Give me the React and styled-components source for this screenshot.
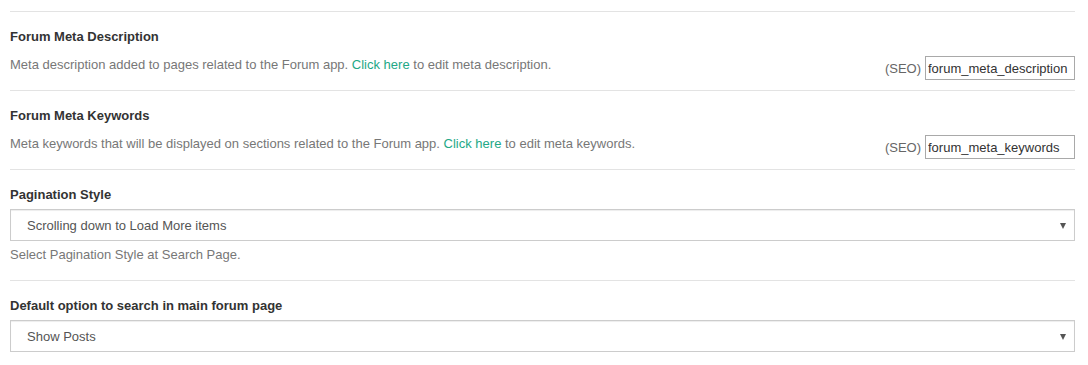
import React from 'react';
import styled, { createGlobalStyle } from 'styled-components';

const GlobalStyle = createGlobalStyle`
    body {
        margin: 0;
        background: #fff;
        font-family: "Liberation Sans", Arial, sans-serif;
    }
`;

const Page = styled.div`
    padding: 11px 13px 0 10px;
`;

const Section = styled.div`
    border-top: 1px solid #e3e3e3;
    padding: 16px 0 10px;
`;

const Title = styled.div`
    font-size: 13px;
    font-weight: bold;
    line-height: 18px;
    color: #333;
`;

const DescRow = styled.div`
    display: flex;
    justify-content: space-between;
    align-items: flex-start;
    margin-top: 10px;
`;

const Desc = styled.div`
    font-size: 13px;
    line-height: 18px;
    color: #777;
    margin-top: ${p => p.$top || 0}px;
    margin-bottom: ${p => p.$bottom || 0}px;
`;

const Link = styled.a`
    color: #23a886;
    text-decoration: none;
`;

const SeoGroup = styled.div`
    display: flex;
    align-items: center;
    gap: 4px;
    font-size: 13px;
    color: #666;
`;

const SeoInput = styled.input`
    box-sizing: border-box;
    width: 150px;
    height: 24px;
    border: 1px solid #a9a9a9;
    padding: 0 2px;
    margin: 0;
    font-family: inherit;
    font-size: 13px;
    color: #333;
    outline: none;
`;

const SelectWrap = styled.div`
    position: relative;
    margin-top: 5px;

    &::after {
        content: '';
        position: absolute;
        right: 9px;
        top: 14px;
        border-left: 3.5px solid transparent;
        border-right: 3.5px solid transparent;
        border-top: 6px solid #555;
    }
`;

const Select = styled.select`
    appearance: none;
    -webkit-appearance: none;
    box-sizing: border-box;
    display: block;
    width: 100%;
    height: 32px;
    margin: 0;
    padding: 0 30px 0 16px;
    border: 1px solid #ccc;
    border-radius: 0;
    background: #fff;
    box-shadow: inset 0 1px 1px rgba(0, 0, 0, 0.075);
    font-family: inherit;
    font-size: 13px;
    color: #555;
    outline: none;
`;

const MetaField = ({ title, text, action, value }) => (
    <Section>
        <Title>{title}</Title>
        <DescRow>
            <Desc>
                {text} <Link href="#">Click here</Link> {action}
            </Desc>
            <SeoGroup>
                (SEO)
                <SeoInput defaultValue={value} />
            </SeoGroup>
        </DescRow>
    </Section>
);

const SelectField = ({ title, options, help }) => (
    <Section>
        <Title>{title}</Title>
        <SelectWrap>
            <Select defaultValue={options[0]}>
                {options.map(o => <option key={o}>{o}</option>)}
            </Select>
        </SelectWrap>
        {help && <Desc $top={5} $bottom={6}>{help}</Desc>}
    </Section>
);

const App = () => {
    return (
        <Page>
            <GlobalStyle />
            <MetaField
                title="Forum Meta Description"
                text="Meta description added to pages related to the Forum app."
                action="to edit meta description."
                value="forum_meta_description"
            />
            <MetaField
                title="Forum Meta Keywords"
                text="Meta keywords that will be displayed on sections related to the Forum app."
                action="to edit meta keywords."
                value="forum_meta_keywords"
            />
            <SelectField
                title="Pagination Style"
                options={['Scrolling down to Load More items', 'Use Pagination with page number']}
                help="Select Pagination Style at Search Page."
            />
            <SelectField
                title="Default option to search in main forum page"
                options={['Show Posts', 'Show Threads']}
            />
        </Page>
    );
};

export default App;
